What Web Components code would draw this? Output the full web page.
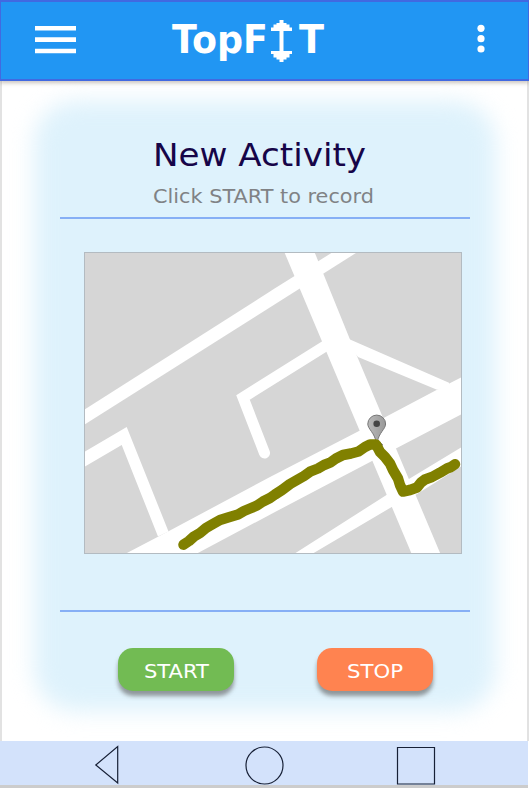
<!DOCTYPE html>
<html lang="en">
<head>
<meta charset="utf-8">
<title>TopFIT</title>
<style>
body{margin:0;background:#fff;font-family:"DejaVu Sans","Liberation Sans",sans-serif}
</style>
</head>
<body>
<topfit-app></topfit-app>
<script>
function define(name, markup) {
  const t = document.createElement('template');
  t.innerHTML = markup;
  customElements.define(name, class extends HTMLElement {
    constructor() {
      super();
      this.attachShadow({ mode: 'open' }).appendChild(t.content.cloneNode(true));
    }
  });
}

// Text stretched to an exact width: <fit-text width size label>
customElements.define('fit-text', class extends HTMLElement {
  connectedCallback() {
    const w = this.getAttribute('width'), s = this.getAttribute('size');
    const h = Math.round(s * 0.729);
    this.attachShadow({ mode: 'open' }).innerHTML =
      `<style>:host{display:block;flex:none}svg{display:block;overflow:visible}text{fill:currentColor}</style>
      <svg width="${w}" height="${h}"><text x="0" y="${h}" font-size="${s}" textLength="${w}" lengthAdjust="spacingAndGlyphs">${this.getAttribute('label')}</text></svg>`;
  }
});

define('app-header', `
<style>
:host{display:flex;box-sizing:border-box;height:81px;margin-bottom:-1px;background:#2196f3;border:2px solid #4169e1;border-left-width:1.5px;border-right-width:1.5px;box-shadow:0 2px 4px rgba(80,60,40,.3);color:#fff;position:relative;z-index:1;padding:0 43px 0 34px;align-items:flex-start}
svg{display:block;overflow:visible}
.menu{margin-top:24px}
.logo{display:flex;margin:22px auto 0 95px;font-weight:bold}
.bell{margin:-4px 7px 0 3px}
.dots{margin-top:22px}
</style>
<svg class="menu" width="42" height="28" fill="#fff"><path d="M0 0h41v4.6H0zM0 11.3h41v4.6H0zM0 22.7h41v4.6H0z"/></svg>
<div class="logo">
<fit-text width="96" size="39.5" label="TopF"></fit-text>
<svg class="bell" width="21" height="42" fill="#fff"><path d="M8.500 0h4v3h3v1.500h3v3h2.500v3.500h-8.500v20h8.500v3h-2.500v3.500h-3v2h-3v2.500h-4v-2.500h-3v-2h-3v-3.500h-2.500v-3h8.500v-20h-8.500v-3.500h2.500v-3h3v-1.500h3z"/></svg>
<fit-text width="25" size="39.5" label="T"></fit-text>
</div>
<svg class="dots" width="8" height="32" fill="#fff"><circle cx="4" cy="4.300" r="3.600"/><circle cx="4" cy="14.700" r="3.600"/><circle cx="4" cy="25" r="3.600"/></svg>`);

define('activity-map', `
<style>:host{display:block;box-sizing:border-box;width:378px;height:302px;border:1px solid #b3bbc1}svg{display:block}</style>
<svg width="376" height="300" viewBox="85 253 376 300">
<defs><linearGradient id="p" x2="1"><stop stop-color="#b9b9b9"/><stop offset="1" stop-color="#999"/></linearGradient></defs>
<path fill="#d6d6d6" d="M80 250h390v310H80z"/>
<g fill="#fff">
<path d="M84 410 275 288.300 333 252H357.500L84 425z"/>
<path d="M284.300 252H314.500L350 339.500 440.500 554H411.700z"/>
<path d="M125 554 169 531 270 477 359 431 437 389.700 462 377V414L372 461 275 512 196 554z"/>
<path d="M340 335 350 339.500 449 382.700 449 386 437 389.700 358 357z"/>
<path d="M84 452 126.700 427 168.500 531.500 158 536.500 121.700 445 84 467z"/>
<path d="M294 554 385.700 495.500 408.500 479.300 462 447V466L417 494 391.700 507 312 554z"/>
</g>
<path d="M330 343 243 397.500 264.500 453" fill="none" stroke="#fff" stroke-width="11" stroke-linecap="round"/>
<path d="M380 442l3 3-3 2z" fill="#222"/>
<path d="M367.800 424a8.900 8.900 0 1 1 17.800 0c0 5-7 9-8.200 18h-1.400c-1.200-9-8.200-13-8.200-18z" fill="url(#p)" stroke="#777" stroke-width="1"/>
<circle cx="376.700" cy="423.700" r="3.300" fill="#444"/>
<path d="M183.500 544.700 189 541 194 536.500 200 533 206 528 212 524.500 220 520 228 517.500 233 516 238 514.500 244 511 250 508.500 257 505.500 263 501.500 270 498 275 494.500 282 490 290 484 297 480 304 476 310 471.700 318 468.500 324 465 330 462.700 336 458.500 343 455 351 453.500 358.500 451.500 365 447 370 444.600 376 444.600 380 452 385 457 390 463.500 393 470 398 478.500 400 485 403 491.500 410 490 417 487.500 421 482.500 425 479.500 432 477 440 472.700 447 468.500 451 467 455 464.200" fill="none" stroke="#808000" stroke-width="10.500" stroke-linecap="round" stroke-linejoin="round"/>
</svg>`);

define('action-button', `
<style>:host{display:flex;justify-content:center;align-items:center;box-sizing:border-box;width:116px;height:43px;padding-top:3px;border-radius:15px;color:#fff;background:var(--fill);box-shadow:0 5px 4px rgba(90,90,90,.6)}</style>
<slot></slot>`);

define('activity-card', `
<style>
:host{display:flex;flex-direction:column;box-sizing:border-box;position:relative;width:410px;height:553px;margin:59px auto 0 57.5px;isolation:isolate}
:host::before{content:"";position:absolute;z-index:-1;inset:-38px -26px -19px -26px;border-radius:42px;background:#def2fc;filter:blur(11px)}
.head{flex:none;height:80px;border-bottom:2px solid #86aff5;padding:4px 0 0 93.5px;box-sizing:border-box}
.title{color:#160548}
.sub{color:#808285;margin-top:23px}
activity-map{flex:none;margin:33px 0 0 24px}
.foot{margin-top:56px;border-top:2px solid #86aff5;padding:36px 36.5px 0 58.5px;display:flex;justify-content:space-between}
</style>
<div class="head">
<fit-text class="title" width="213" size="32" label="New Activity"></fit-text>
<fit-text class="sub" width="221" size="19.400" label="Click START to record"></fit-text>
</div>
<activity-map></activity-map>
<div class="foot">
<action-button style="--fill:#72bb53"><fit-text width="65" size="19" label="START"></fit-text></action-button>
<action-button style="--fill:#ff8350"><fit-text width="56" size="19" label="STOP"></fit-text></action-button>
</div>`);

define('device-nav', `
<style>:host{display:flex;box-sizing:border-box;height:47px;background:#d3e2fb;border-bottom:3px solid #ccc;margin-right:1px;padding:4px 93px 0 95px;justify-content:space-between}svg{display:block;overflow:visible;fill:none;stroke:#172036;stroke-width:1.200}</style>
<svg width="24" height="40"><path d="M.8 20 22.700 1.500V38z"/></svg>
<svg width="38" height="40" style="margin-left:13px"><circle cx="18.500" cy="20.500" r="18.500"/></svg>
<svg width="38" height="40"><path d="M.5 2.500h37v36.500H.5z"/></svg>`);

define('topfit-app', `
<style>
:host{display:flex;flex-direction:column;width:529px;height:788px;overflow:hidden;background:#fff}
main{flex:1;min-height:0;box-sizing:border-box;border:solid #e2e2e2;border-width:0 2px}
</style>
<app-header></app-header>
<main><activity-card></activity-card></main>
<device-nav></device-nav>`);
</script>
</body>
</html>
